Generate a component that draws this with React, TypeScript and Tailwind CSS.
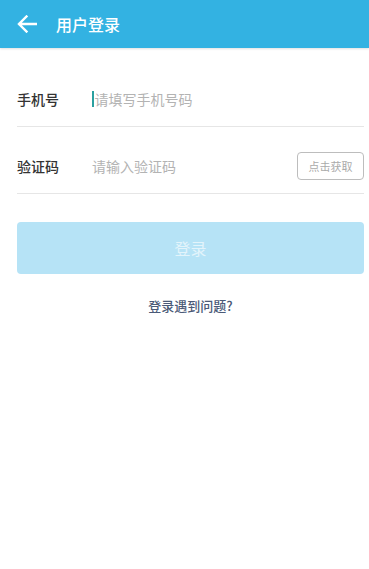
import React from 'react';

const font = { fontFamily: '"Noto Sans CJK SC", "Noto Sans", sans-serif' };

export default function App() {
  return (
    <div className="w-[369px] h-[569px] bg-white flex flex-col" style={font}>
      {/* Header */}
      <div className="h-[48px] bg-[#33b2e2] flex items-center shadow-[0_1px_2px_rgba(0,0,0,0.12)]">
        <svg className="ml-[17px]" width="20" height="18" viewBox="0 0 20 18" fill="none">
          <path d="M19 9H2.5M9.5 1.5L2 9l7.5 7.5" stroke="white" strokeWidth="2.4" strokeLinecap="square" />
        </svg>
        <span className="ml-[19px] text-white text-[16px] font-medium">用户登录</span>
      </div>

      {/* Form */}
      <div className="pl-[17px] pr-[5px] pt-[34px]">
        <div className="flex items-center h-[34px]">
          <span className="w-[75px] text-[14px] font-medium text-[#333]">手机号</span>
          <div className="flex items-center">
            <span className="w-[1.5px] h-[16px] bg-[#2aa0a0] mr-[1px]"></span>
            <span className="text-[14px] text-[#b3b3b3]">请填写手机号码</span>
          </div>
        </div>
        <div className="mt-[10px] h-px bg-[#e6e6e6]"></div>

        <div className="flex items-center h-[34px] mt-[22px]">
          <span className="w-[75px] text-[14px] font-medium text-[#333]">验证码</span>
          <span className="flex-1 text-[14px] text-[#b3b3b3]">请输入验证码</span>
          <div className="w-[67px] h-[28px] border border-[#bdbdbd] rounded-[4px] flex items-center justify-center text-[11px] text-[#aaa]">
            点击获取
          </div>
        </div>
        <div className="mt-[10px] h-px bg-[#e6e6e6]"></div>

        <div className="mt-[28px] h-[52px] rounded-[4px] bg-[#b6e3f6] flex items-center justify-center text-[16px] text-[#e3f4fb]">
          登录
        </div>

        <div className="mt-[22px] leading-[20px] text-center text-[13px] text-[#4b5a78] font-medium">登录遇到问题?</div>
      </div>
    </div>
  );
}
